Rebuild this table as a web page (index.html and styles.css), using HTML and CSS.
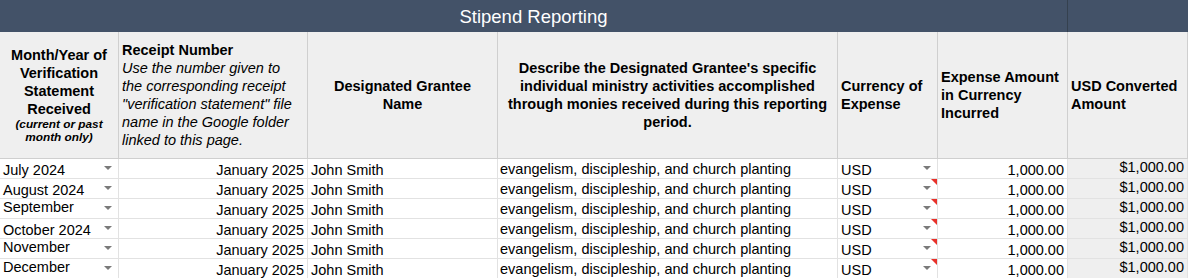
FILE: index.html
```html
<!DOCTYPE html>
<html>
<head>
<meta charset="utf-8">
<link rel="stylesheet" href="styles.css">
</head>
<body>
<div class="titlebar">
  <div class="title">Stipend Reporting</div>
  <div class="title-rest"></div>
</div>
<div class="sheet">
  <div class="hcell center">Month/Year of<br>Verification<br>Statement<br>Received<br><span class="note">(current or past<br>month only)</span></div>
  <div class="hcell left">Receipt Number<br><span class="hint">Use the number given to<br>the corresponding receipt<br>"verification statement" file<br>name in the Google folder<br>linked to this page.</span></div>
  <div class="hcell center">Designated Grantee<br>Name</div>
  <div class="hcell center">Describe the Designated Grantee's specific<br>individual ministry activities accomplished<br>through monies received during this reporting<br>period.</div>
  <div class="hcell left">Currency of<br>Expense</div>
  <div class="hcell left">Expense Amount<br>in Currency<br>Incurred</div>
  <div class="hcell left">USD Converted<br>Amount</div>

  <div class="cell bot dd">July 2024<span class="arrow"></span></div>
  <div class="cell bot right">January 2025</div>
  <div class="cell bot">John Smith</div>
  <div class="cell mid desc">evangelism, discipleship, and church planting</div>
  <div class="cell bot dd cur">USD<span class="arrow"></span></div>
  <div class="cell bot right">1,000.00</div>
  <div class="cell top right calc">$1,000.00</div>

  <div class="cell bot dd">August 2024<span class="arrow"></span></div>
  <div class="cell bot right">January 2025</div>
  <div class="cell bot">John Smith</div>
  <div class="cell mid desc">evangelism, discipleship, and church planting</div>
  <div class="cell bot dd cur">USD<span class="arrow"></span><span class="flag"></span></div>
  <div class="cell bot right">1,000.00</div>
  <div class="cell top right calc">$1,000.00</div>

  <div class="cell top dd">September<span class="arrow"></span></div>
  <div class="cell bot right">January 2025</div>
  <div class="cell bot">John Smith</div>
  <div class="cell mid desc">evangelism, discipleship, and church planting</div>
  <div class="cell bot dd cur">USD<span class="arrow"></span><span class="flag"></span></div>
  <div class="cell bot right">1,000.00</div>
  <div class="cell top right calc">$1,000.00</div>

  <div class="cell bot dd">October 2024<span class="arrow"></span></div>
  <div class="cell bot right">January 2025</div>
  <div class="cell bot">John Smith</div>
  <div class="cell mid desc">evangelism, discipleship, and church planting</div>
  <div class="cell bot dd cur">USD<span class="arrow"></span><span class="flag"></span></div>
  <div class="cell bot right">1,000.00</div>
  <div class="cell top right calc">$1,000.00</div>

  <div class="cell top dd">November<span class="arrow"></span></div>
  <div class="cell bot right">January 2025</div>
  <div class="cell bot">John Smith</div>
  <div class="cell mid desc">evangelism, discipleship, and church planting</div>
  <div class="cell bot dd cur">USD<span class="arrow"></span><span class="flag"></span></div>
  <div class="cell bot right">1,000.00</div>
  <div class="cell top right calc">$1,000.00</div>

  <div class="cell top dd">December<span class="arrow"></span></div>
  <div class="cell bot right">January 2025</div>
  <div class="cell bot">John Smith</div>
  <div class="cell mid desc">evangelism, discipleship, and church planting</div>
  <div class="cell bot dd cur">USD<span class="arrow"></span><span class="flag"></span></div>
  <div class="cell bot right">1,000.00</div>
  <div class="cell top right calc">$1,000.00</div>
</div>
</body>
</html>
```
FILE: styles.css
```css
* { box-sizing: border-box; }
html, body { margin: 0; padding: 0; background: #fff; }
body {
  font-family: "Liberation Sans", Arial, sans-serif;
  color: #000;
  width: 1188px;
  height: 278px;
  overflow: hidden;
}
.titlebar {
  display: flex;
  height: 32px;
  background: #435268;
}
.title {
  flex: 0 0 1068px;
  border-right: 1px solid #35414f;
  color: #fff;
  font-size: 18.5px;
  display: flex;
  align-items: center;
  justify-content: center;
  padding-top: 1px;
}
.title-rest { flex: 1; }
.sheet {
  display: grid;
  grid-template-columns: 119px 189px 190px 340px 100px 130px 1fr;
  grid-template-rows: 127px repeat(6, 20px);
}
.hcell {
  background: #efefef;
  border-right: 1px solid #cfcfcf;
  border-bottom: 1px solid #cfcfcf;
  font-weight: bold;
  font-size: 14.5px;
  line-height: 18px;
  display: flex;
  flex-direction: column;
  justify-content: center;
  padding: 0 3px;
}
.hcell.center { text-align: center; }
.hcell.left { text-align: left; }
.hcell .note {
  font-size: 11.8px;
  font-style: italic;
  line-height: 13px;
  display: inline-block;
}
.hcell .hint {
  font-weight: normal;
  font-style: italic;
}
.cell {
  position: relative;
  display: flex;
  border-right: 1px solid #e2e2e2;
  border-bottom: 1px solid #e2e2e2;
  font-size: 14.5px;
  line-height: 16px;
  padding: 0 3px;
  white-space: nowrap;
  overflow: hidden;
}
.cell.bot { align-items: flex-end; }
.cell.mid { align-items: center; }
.cell.top { align-items: flex-start; }
.cell.right { justify-content: flex-end; }
.cell.desc { padding-left: 2px; }
.cell.calc { background: #efefef; }
.arrow {
  position: absolute;
  top: 7px;
  right: 6px;
  width: 0;
  height: 0;
  border-left: 4px solid transparent;
  border-right: 4px solid transparent;
  border-top: 4px solid #7a7a7a;
}
.flag {
  position: absolute;
  top: 0;
  right: 0;
  width: 0;
  height: 0;
  border-top: 6px solid #e8312b;
  border-left: 6px solid transparent;
}
```
